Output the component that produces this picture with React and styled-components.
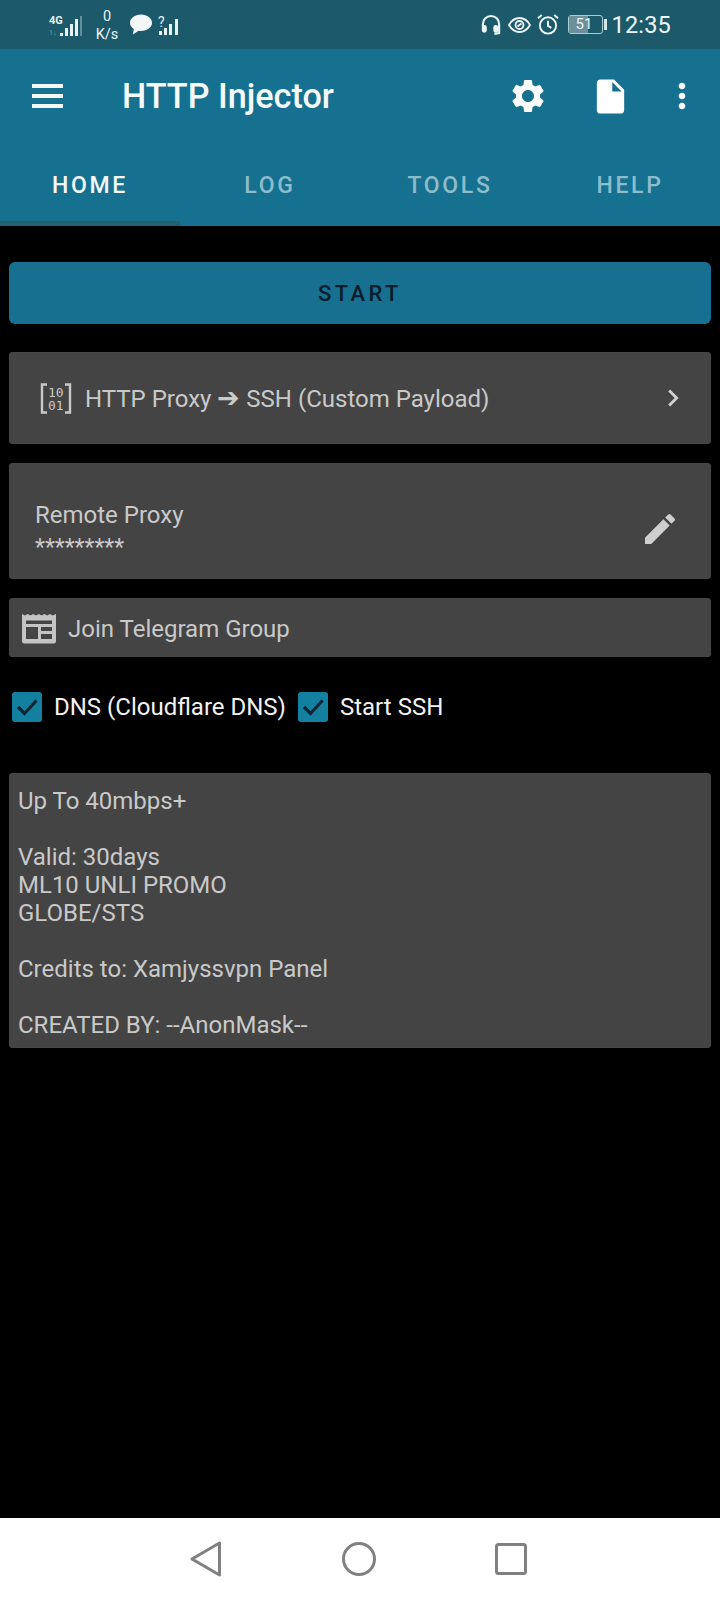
import React from 'react';
import styled, { createGlobalStyle } from 'styled-components';
import { MdSettings, MdInsertDriveFile, MdMoreVert, MdChevronRight, MdEdit } from 'react-icons/md';

const GlobalStyle = createGlobalStyle`
  html, body { margin: 0; padding: 0; background: #000; }
  * { box-sizing: border-box; }
  body { font-family: Roboto, "Liberation Sans", sans-serif; }
`;

const TABS = ['HOME', 'LOG', 'TOOLS', 'HELP'];
const INFO = ['Up To 40mbps+', '', 'Valid: 30days', 'ML10 UNLI PROMO', 'GLOBE/STS', '', 'Credits to: Xamjyssvpn Panel', '', 'CREATED BY: --AnonMask--'];

function SignalIcon() {
  return (
    <svg width="36" height="24" viewBox="0 0 36 24" fill="#e8f1f3">
      <text x="1" y="11" fontSize="11" fontWeight="700" fontFamily="Roboto, sans-serif">4G</text>
      <text x="1" y="22" fontSize="7" opacity="0.4" fontFamily="Roboto, sans-serif">1↓</text>
      <rect x="12" y="20" width="3" height="3" />
      <rect x="17" y="15" width="3" height="8" />
      <rect x="22" y="11" width="3" height="12" />
      <rect x="27" y="6" width="3" height="17" />
      <rect x="32" y="3" width="2" height="20" opacity="0.35" />
    </svg>
  );
}

function BubbleIcon() {
  return (
    <svg width="22" height="21" viewBox="0 0 23 21" fill="#f3f7f8">
      <path d="M11.5 0C5 0 0 3.800 0 8.700c0 2.800 1.600 5 4 6.500L3 21l6-4c.8.2 1.600.2 2.500.2C18 17.200 23 13.500 23 8.700 23 3.800 18 0 11.500 0z" />
    </svg>
  );
}

function NoSimSignal() {
  return (
    <svg width="22" height="25" viewBox="0 -4 22 25" fill="#e8f1f3">
      <text x="0" y="11" fontSize="14" fontFamily="Roboto, sans-serif">?</text>
      <rect x="1" y="15" width="3" height="4" />
      <rect x="6" y="12" width="3" height="7" />
      <rect x="11" y="8" width="3" height="11" />
      <rect x="17" y="3" width="3" height="16" />
    </svg>
  );
}

function HeadsetIcon() {
  return (
    <svg width="21" height="22" viewBox="0 0 22 22" fill="none" stroke="#eef5f6" strokeWidth="2.200">
      <path d="M2 14V10a8.500 8.500 0 0 1 17 0v9.500l-5 .8" />
      <rect x="2" y="12" width="3" height="6" rx="1.500" fill="#eef5f6" />
      <rect x="14" y="12" width="3" height="6" rx="1.500" fill="#eef5f6" />
    </svg>
  );
}

function EyeIcon() {
  return (
    <svg width="23" height="16" viewBox="0 0 23 16" fill="none" stroke="#eef5f6" strokeWidth="1.800">
      <path d="M1 8c2.500-4.500 6-7 10.500-7S19.500 3.500 22 8c-2.500 4.500-6 7-10.500 7S3.500 12.500 1 8z" />
      <circle cx="11.500" cy="8" r="4" />
      <path d="M9.500 9.500l4-3" />
    </svg>
  );
}

function AlarmIcon() {
  return (
    <svg width="22" height="23" viewBox="0 0 23 23" fill="none" stroke="#eef5f6" strokeWidth="2">
      <circle cx="11.500" cy="12.500" r="8.500" />
      <path d="M11.500 7.500v5.500l3.500 2M1 5l4-3.500M22 5l-4-3.500" />
    </svg>
  );
}

function BatteryIcon() {
  return (
    <BatteryBox>
      <BatteryLevel>51</BatteryLevel>
      <BatteryCap />
    </BatteryBox>
  );
}

function BinaryIcon() {
  return (
    <svg width="32" height="31" viewBox="0 0 32 31" fill="none" stroke="#c9c9c9" strokeWidth="2.400">
      <path d="M7 1.500H2v28h5M25 1.500h5v28h-5" />
      <text x="8" y="13.500" fontSize="13" fill="#c9c9c9" stroke="none" fontFamily="'DejaVu Sans Mono', monospace">10</text>
      <text x="8" y="27" fontSize="13" fill="#c9c9c9" stroke="none" fontFamily="'DejaVu Sans Mono', monospace">01</text>
    </svg>
  );
}

function GroupIcon() {
  return (
    <svg width="36" height="32" viewBox="0 0 36 32">
      <path
        fill="#c4c4c4"
        d="M1 2l2.800 1.500L6.600 2l2.800 1.500L12.200 2 15 3.500 17.800 2l2.800 1.500L23.400 2l2.800 1.500L29 2l2.800 1.500L35 2v27a2.500 2.500 0 0 1-2.500 2.500h-29A2.500 2.500 0 0 1 1 29z"
      />
      <path
        fill="#444"
        d="M5 8.500h26v3.500H5zM5 15h12v12H5zM20 15h11v4H20zM20 22h11v5H20z"
      />
    </svg>
  );
}

function CheckMark() {
  return (
    <svg width="24" height="20" viewBox="0 0 24 20" fill="none" stroke="currentColor" strokeWidth="3.200">
      <path d="M3 10l6.500 6.500L21.500 3.500" />
    </svg>
  );
}

function BackIcon() {
  return (
    <svg width="32" height="36" viewBox="0 0 32 36" fill="none" stroke="#808080" strokeWidth="3" strokeLinejoin="round">
      <path d="M29.500 2v32L2 18z" />
    </svg>
  );
}

function HomeIcon() {
  return (
    <svg width="34" height="34" viewBox="0 0 34 34" fill="none" stroke="#808080" strokeWidth="3">
      <circle cx="17" cy="17" r="15.500" />
    </svg>
  );
}

function RecentIcon() {
  return (
    <svg width="32" height="32" viewBox="0 0 32 32" fill="none" stroke="#808080" strokeWidth="3">
      <rect x="1.500" y="1.500" width="29" height="29" rx="2" />
    </svg>
  );
}

export default function App() {
  return (
    <Page>
      <GlobalStyle />
      <StatusBar>
        <StatusGroup>
          <SignalIcon />
          <Speed>
            <span>0</span>
            <span>K/s</span>
          </Speed>
          <BubbleIcon />
          <NoSimSignal />
        </StatusGroup>
        <StatusGroup>
          <HeadsetIcon />
          <EyeIcon />
          <AlarmIcon />
          <BatteryIcon />
          <Clock>12:35</Clock>
        </StatusGroup>
      </StatusBar>

      <AppBar>
        <ToolRow>
          <MenuSlot>
            <MenuBar />
            <MenuBar />
            <MenuBar />
          </MenuSlot>
          <Title>HTTP Injector</Title>
          <ActionSlot $width={96}><MdSettings size={40} /></ActionSlot>
          <ActionSlot $width={68}><MdInsertDriveFile size={41} /></ActionSlot>
          <ActionSlot $width={76}><MdMoreVert size={40} /></ActionSlot>
        </ToolRow>
        <TabRow>
          {TABS.map((tab, i) => (
            <Tab key={tab} $active={i === 0}>{tab}</Tab>
          ))}
        </TabRow>
      </AppBar>

      <Content>
        <StartButton>START</StartButton>

        <ModePanel>
          <BinaryIcon />
          <ModeText>HTTP Proxy <Arrow>➔</Arrow> SSH (Custom Payload)</ModeText>
          <MdChevronRight size={34} color="#d0d0d0" />
        </ModePanel>

        <ProxyPanel>
          <ProxyText>
            <ProxyLabel>Remote Proxy</ProxyLabel>
            <ProxyValue>*********</ProxyValue>
          </ProxyText>
          <EditSlot><MdEdit size={40} color="#cfcfcf" /></EditSlot>
        </ProxyPanel>

        <GroupPanel>
          <GroupIcon />
          <GroupText>Join Telegram Group</GroupText>
        </GroupPanel>

        <CheckRow>
          <CheckItem>
            <CheckBox><CheckMark /></CheckBox>
            <CheckLabel>DNS (Cloudflare DNS)</CheckLabel>
          </CheckItem>
          <CheckItem>
            <CheckBox><CheckMark /></CheckBox>
            <CheckLabel>Start SSH</CheckLabel>
          </CheckItem>
        </CheckRow>

        <InfoPanel>
          {INFO.map((line, i) => (
            <InfoLine key={i}>{line}</InfoLine>
          ))}
        </InfoPanel>
      </Content>

      <NavBar>
        <BackIcon />
        <HomeIcon />
        <RecentIcon />
      </NavBar>
    </Page>
  );
}

const Page = styled.div`
  width: 720px;
  height: 1600px;
  display: flex;
  flex-direction: column;
  background: #000;
  overflow: hidden;
`;

const StatusBar = styled.div`
  height: 49px;
  padding: 0 49px 0 48px;
  display: flex;
  align-items: center;
  justify-content: space-between;
  background: #1c5a6b;
  color: #eef5f6;
`;

const StatusGroup = styled.div`
  display: flex;
  align-items: center;
  gap: 6px;
`;

const Speed = styled.div`
  width: 34px;
  margin: 2px 0 0;
  display: flex;
  flex-direction: column;
  align-items: center;
  font-size: 14.500px;
  line-height: 18px;
`;

const Clock = styled.div`
  margin-left: 1px;
  font-size: 23.500px;
  letter-spacing: 0.2px;
`;

const BatteryBox = styled.div`
  position: relative;
  width: 35px;
  height: 19px;
  margin-left: 3px;
  margin-right: 1px;
  border: 1px solid #a9ccd6;
  border-radius: 3px;
`;

const BatteryLevel = styled.div`
  width: 55%;
  height: 100%;
  padding-left: 6px;
  background: #6c8f9a;
  font-size: 15px;
  line-height: 17px;
`;

const BatteryCap = styled.div`
  position: absolute;
  top: 3px;
  right: -5px;
  width: 3px;
  height: 11px;
  background: #d5e6ea;
`;

const AppBar = styled.div`
  height: 177px;
  display: flex;
  flex-direction: column;
  background: #16708f;
`;

const ToolRow = styled.div`
  height: 94px;
  display: flex;
  align-items: center;
  color: #fff;
`;

const MenuSlot = styled.div`
  width: 122px;
  padding-left: 32px;
  display: flex;
  flex-direction: column;
  gap: 6px;
`;

const MenuBar = styled.div`
  width: 31px;
  height: 4px;
  background: #f4f8f9;
`;

const Title = styled.div`
  flex: 1;
  font-size: 34.200px;
  font-weight: 500;
  color: #f6fafb;
`;

const ActionSlot = styled.div`
  width: ${({ $width }) => $width}px;
  display: flex;
  justify-content: center;
`;

const TabRow = styled.div`
  flex: 1;
  display: grid;
  grid-template-columns: repeat(4, 1fr);
`;

const Tab = styled.div`
  display: flex;
  align-items: center;
  justify-content: center;
  padding-top: 7px;
  font-size: 23px;
  font-weight: 500;
  letter-spacing: 2.700px;
  color: ${({ $active }) => ($active ? '#f4f8f9' : '#8dbccb')};
  border-bottom: 5px solid ${({ $active }) => ($active ? '#245f72' : 'transparent')};
`;

const Content = styled.div`
  flex: 1;
  padding: 36px 9px 0;
  display: flex;
  flex-direction: column;
`;

const StartButton = styled.div`
  height: 62px;
  display: flex;
  align-items: center;
  justify-content: center;
  background: #17708f;
  border-radius: 6px;
  font-size: 22px;
  font-weight: 500;
  letter-spacing: 3.400px;
  color: #0b1c2b;
`;

const Panel = styled.div`
  background: #444;
  border: 1px solid #474747;
  border-radius: 3px;
  color: #c9c9c9;
`;

const ModePanel = styled(Panel)`
  height: 92px;
  margin-top: 28px;
  padding: 0 20px 0 30px;
  display: flex;
  align-items: center;
`;

const ModeText = styled.div`
  flex: 1;
  margin-left: 13px;
  padding-top: 2px;
  font-size: 24px;
`;

const Arrow = styled.span`
  font-size: 27px;
  line-height: 1;
`;

const ProxyPanel = styled(Panel)`
  height: 116px;
  margin-top: 19px;
  padding: 0 30px 0 25px;
  display: flex;
  align-items: center;
  justify-content: space-between;
`;

const ProxyText = styled.div`
  margin-top: 21px;
  display: flex;
  flex-direction: column;
`;

const ProxyLabel = styled.div`
  font-size: 24px;
  line-height: 31px;
`;

const ProxyValue = styled.div`
  margin-top: 1px;
  font-size: 23px;
  line-height: 31px;
`;

const EditSlot = styled.div`
  margin-top: 16px;
  display: flex;
`;

const GroupPanel = styled(Panel)`
  height: 59px;
  margin-top: 19px;
  padding: 0 11px;
  display: flex;
  align-items: center;
  gap: 11px;
`;

const GroupText = styled.div`
  padding-top: 2px;
  font-size: 24px;
`;

const CheckRow = styled.div`
  margin-top: 35px;
  padding-left: 3px;
  display: flex;
  gap: 12px;
`;

const CheckItem = styled.div`
  display: flex;
  align-items: center;
  gap: 12px;
`;

const CheckBox = styled.div`
  width: 30px;
  height: 30px;
  display: flex;
  align-items: center;
  justify-content: center;
  background: #14809f;
  border-radius: 3px;
  color: #0e2533;
`;

const CheckLabel = styled.div`
  font-size: 24px;
  color: #f2f2f2;
`;

const InfoPanel = styled(Panel)`
  height: 275px;
  margin-top: 51px;
  padding: 13px 8px 0;
`;

const InfoLine = styled.div`
  min-height: 28px;
  font-size: 24px;
  line-height: 28px;
`;

const NavBar = styled.div`
  height: 82px;
  padding: 0 193px 0 190px;
  display: flex;
  align-items: center;
  justify-content: space-between;
  background: #fff;
`;
